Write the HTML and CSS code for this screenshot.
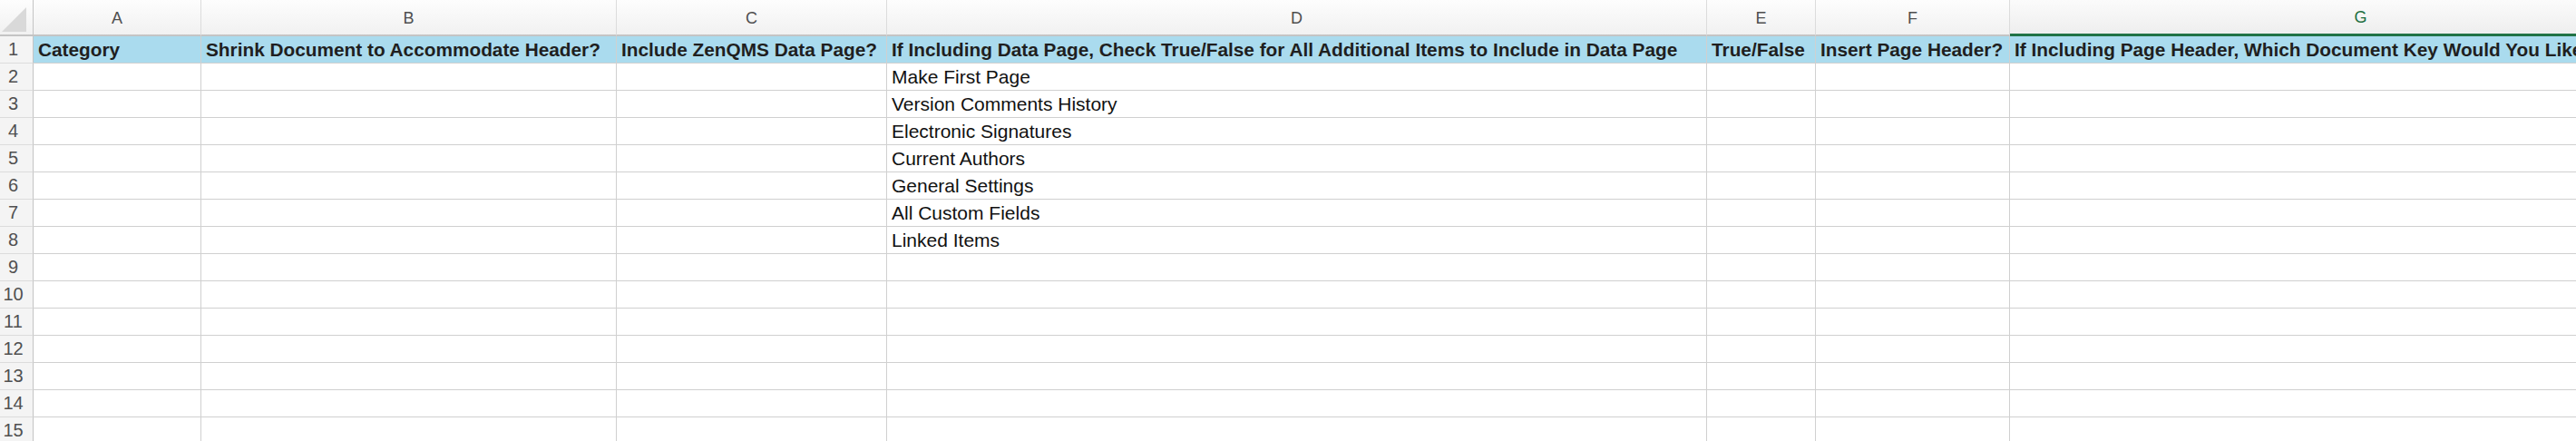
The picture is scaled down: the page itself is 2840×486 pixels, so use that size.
FILE: index.html
```html
<!DOCTYPE html>
<html lang="en">

<head>
    <meta charset="UTF-8">
    <title>Document Settings Sheet</title>
    <link rel="stylesheet" href="styles.css">
</head>

<body>
    <div class="sheet">
        <table class="grid">
            <colgroup>
                <col class="col-rownum">
                <col class="col-a">
                <col class="col-b">
                <col class="col-c">
                <col class="col-d">
                <col class="col-e">
                <col class="col-f">
                <col class="col-g">
            </colgroup>
            <thead>
                <tr class="letters">
                    <th class="corner">
                        <svg width="30" height="30" viewBox="0 0 30 30">
                            <polygon points="29,2 29,29 2,29" fill="#d9d9d9" />
                        </svg>
                    </th>
                    <th>A</th>
                    <th>B</th>
                    <th>C</th>
                    <th>D</th>
                    <th>E</th>
                    <th>F</th>
                    <th class="selected">G</th>
                </tr>
            </thead>
            <tbody>
                <tr class="title-row">
                    <th class="rownum">1</th>
                    <td>Category</td>
                    <td>Shrink Document to Accommodate Header?</td>
                    <td>Include ZenQMS Data Page?</td>
                    <td>If Including Data Page, Check True/False for All Additional Items to Include in Data Page</td>
                    <td>True/False</td>
                    <td>Insert Page Header?</td>
                    <td>If Including Page Header, Which Document Key Would You Like to Use?</td>
                </tr>
                <tr><th class="rownum">2</th><td></td><td></td><td></td><td>Make First Page</td><td></td><td></td><td></td></tr>
                <tr><th class="rownum">3</th><td></td><td></td><td></td><td>Version Comments History</td><td></td><td></td><td></td></tr>
                <tr><th class="rownum">4</th><td></td><td></td><td></td><td>Electronic Signatures</td><td></td><td></td><td></td></tr>
                <tr><th class="rownum">5</th><td></td><td></td><td></td><td>Current Authors</td><td></td><td></td><td></td></tr>
                <tr><th class="rownum">6</th><td></td><td></td><td></td><td>General Settings</td><td></td><td></td><td></td></tr>
                <tr><th class="rownum">7</th><td></td><td></td><td></td><td>All Custom Fields</td><td></td><td></td><td></td></tr>
                <tr><th class="rownum">8</th><td></td><td></td><td></td><td>Linked Items</td><td></td><td></td><td></td></tr>
                <tr><th class="rownum">9</th><td></td><td></td><td></td><td></td><td></td><td></td><td></td></tr>
                <tr><th class="rownum">10</th><td></td><td></td><td></td><td></td><td></td><td></td><td></td></tr>
                <tr><th class="rownum">11</th><td></td><td></td><td></td><td></td><td></td><td></td><td></td></tr>
                <tr><th class="rownum">12</th><td></td><td></td><td></td><td></td><td></td><td></td><td></td></tr>
                <tr><th class="rownum">13</th><td></td><td></td><td></td><td></td><td></td><td></td><td></td></tr>
                <tr><th class="rownum">14</th><td></td><td></td><td></td><td></td><td></td><td></td><td></td></tr>
                <tr><th class="rownum">15</th><td></td><td></td><td></td><td></td><td></td><td></td><td></td></tr>
            </tbody>
        </table>
    </div>
</body>

</html>
```

FILE: styles.css
```css
* {
    margin: 0;
    padding: 0;
    box-sizing: border-box;
}

body {
    font-family: "Liberation Sans", Arial, sans-serif;
    background: white;
    height: 100vh;
    overflow: hidden;
}

.sheet {
    width: 100%;
    height: 100%;
    overflow: hidden;
}

.grid {
    table-layout: fixed;
    border-collapse: separate;
    border-spacing: 0;
    width: 2990px;
}

.col-rownum { width: 37px; }
.col-a { width: 185px; }
.col-b { width: 458px; }
.col-c { width: 298px; }
.col-d { width: 904px; }
.col-e { width: 120px; }
.col-f { width: 214px; }
.col-g { width: 774px; }

.grid td,
.grid th {
    border-right: 1px solid #d0d0d0;
    border-bottom: 1px solid #d0d0d0;
    white-space: nowrap;
    overflow: hidden;
    vertical-align: middle;
}

/* column letters */
.letters {
    height: 40px;
}

.letters th {
    background: linear-gradient(#fdfdfd, #f1f1f1);
    border-bottom: 2px solid #c4c4c4;
    border-right-color: #dcdcdc;
    font-weight: normal;
    font-size: 18px;
    color: #4f4f4f;
    text-align: center;
    padding-top: 2px;
}

.letters th.corner {
    border-right: 1px solid #c4c4c4;
    padding: 0;
    vertical-align: bottom;
    text-align: left;
}

.corner svg {
    display: block;
    margin-bottom: 2px;
}

.letters th.selected {
    color: #1e6e3f;
    border-bottom: 3px solid #217346;
    background: linear-gradient(#fbfbfb, #eeeeee);
}

/* rows */
tbody tr {
    height: 30px;
}

.rownum {
    background: #f4f4f4;
    border-right: 1px solid #c4c4c4 !important;
    border-bottom-color: #dcdcdc !important;
    font-weight: normal;
    font-size: 20px;
    color: #505050;
    text-align: center;
    padding-right: 7px;
}

.grid td {
    padding: 0 5px;
    font-size: 21px;
    color: #111;
}

.title-row td {
    background: #aadbee;
    font-weight: bold;
    font-size: 20.8px;
    color: #1f1f1f;
}
```
